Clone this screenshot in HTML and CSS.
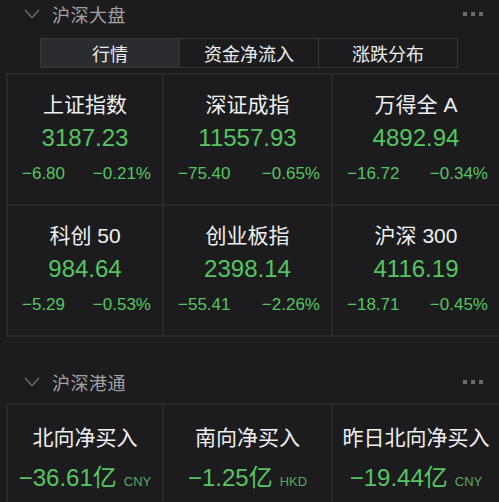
FILE: index.html
```html
<!DOCTYPE html>
<html lang="zh-CN">
<head>
    <meta charset="UTF-8">
    <meta name="viewport" content="width=device-width, initial-scale=1.0">
    <title>沪深大盘</title>
    <link rel="stylesheet" href="styles.css">
</head>
<body>
    <div class="section-head">
        <svg class="chevron" width="16" height="10" viewBox="0 0 16 10">
            <polyline points="1,1 8,8.5 15,1" fill="none" stroke="#6c6c6e" stroke-width="1.3"/>
        </svg>
        <span class="section-title">沪深大盘</span>
        <span class="more"><i></i><i></i><i></i></span>
    </div>

    <div class="tabs">
        <div class="tab active">行情</div>
        <div class="tab">资金净流入</div>
        <div class="tab">涨跌分布</div>
    </div>

    <div class="grid">
        <div class="cell">
            <div class="name">上证指数</div>
            <div class="price">3187.23</div>
            <div class="change"><span>−6.80</span><span>−0.21%</span></div>
        </div>
        <div class="cell">
            <div class="name">深证成指</div>
            <div class="price">11557.93</div>
            <div class="change"><span>−75.40</span><span>−0.65%</span></div>
        </div>
        <div class="cell">
            <div class="name">万得全 A</div>
            <div class="price">4892.94</div>
            <div class="change"><span>−16.72</span><span>−0.34%</span></div>
        </div>
        <div class="cell">
            <div class="name">科创 50</div>
            <div class="price">984.64</div>
            <div class="change"><span>−5.29</span><span>−0.53%</span></div>
        </div>
        <div class="cell">
            <div class="name">创业板指</div>
            <div class="price">2398.14</div>
            <div class="change"><span>−55.41</span><span>−2.26%</span></div>
        </div>
        <div class="cell">
            <div class="name">沪深 300</div>
            <div class="price">4116.19</div>
            <div class="change"><span>−18.71</span><span>−0.45%</span></div>
        </div>
    </div>

    <div class="section-head second">
        <svg class="chevron" width="16" height="10" viewBox="0 0 16 10">
            <polyline points="1,1 8,8.5 15,1" fill="none" stroke="#6c6c6e" stroke-width="1.3"/>
        </svg>
        <span class="section-title">沪深港通</span>
        <span class="more"><i></i><i></i><i></i></span>
    </div>

    <div class="grid flow">
        <div class="cell">
            <div class="name">北向净买入</div>
            <div class="amount">−36.61亿<span class="unit">CNY</span></div>
        </div>
        <div class="cell">
            <div class="name">南向净买入</div>
            <div class="amount">−1.25亿<span class="unit">HKD</span></div>
        </div>
        <div class="cell">
            <div class="name">昨日北向净买入</div>
            <div class="amount">−19.44亿<span class="unit">CNY</span></div>
        </div>
    </div>
</body>
</html>
```

FILE: styles.css
```css
body {
    margin: 0;
    height: 502px;
    overflow: hidden;
    background: #1c1c1e;
    color: #f0f0f0;
    font-family: "Liberation Sans", "Noto Sans CJK SC", sans-serif;
}
.section-head {
    display: flex;
    align-items: center;
    height: 28px;
    padding: 0 16px 0 24px;
}
.section-head.second {
    margin-top: 31px;
    margin-bottom: 7px;
}
.chevron {
    margin-right: 12px;
}
.section-title {
    flex: 1;
    font-size: 18px;
    color: #a2a2a4;
    letter-spacing: 0.5px;
}
.more {
    display: flex;
    gap: 4px;
}
.more i {
    width: 4px;
    height: 4px;
    background: #6a6a6c;
}
.tabs {
    display: flex;
    margin: 10px 41px 0 40px;
    border: 1px solid #38383a;
    height: 28px;
}
.tab {
    flex: 1;
    display: flex;
    align-items: center;
    justify-content: center;
    font-size: 18px;
    color: #ececec;
    border-left: 1px solid #38383a;
}
.tab:first-child {
    border-left: none;
}
.tab.active {
    background: #2a2c2f;
}
.grid {
    display: grid;
    grid-template-columns: 154px 167px 1fr;
    grid-auto-rows: 129px;
    gap: 2px;
    margin: 5px 0 0 6px;
    padding: 2px 0 2px 2px;
    background: #29292b;
}
.grid.flow {
    margin-top: 0;
    grid-auto-rows: 120px;
}
.cell {
    background: #1c1c1e;
    text-align: center;
    padding-top: 18px;
}
.flow .cell {
    padding-top: 21px;
}
.name {
    font-size: 21px;
    line-height: 24px;
}
.price {
    margin-top: 6px;
    font-size: 24px;
    line-height: 30px;
    color: #55c561;
}
.change {
    display: flex;
    justify-content: space-between;
    margin-top: 10px;
    padding: 0 11px 0 14px;
    font-size: 17px;
    line-height: 22px;
    color: #55c561;
}
.amount {
    margin-top: 13px;
    font-size: 24px;
    line-height: 30px;
    color: #55c561;
}
.unit {
    margin-left: 7px;
    font-size: 13px;
    color: #58a862;
}
```
